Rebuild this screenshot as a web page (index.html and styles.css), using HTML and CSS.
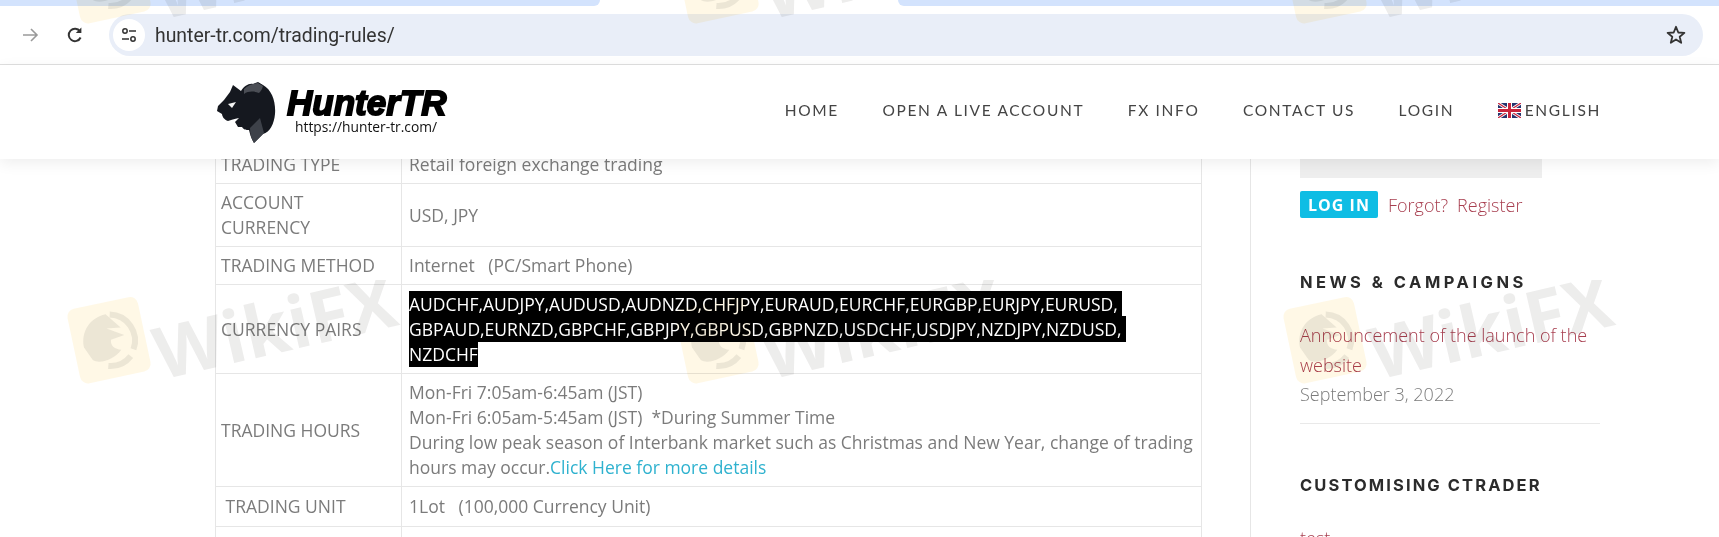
FILE: index.html
```html
<!DOCTYPE html>
<html lang="en">
    <head>
        <meta charset="UTF-8" />
        <title>Trading Rules - HunterTR</title>
        <link rel="stylesheet" href="styles.css">
    </head>
    <body>
        <svg class="defs" width="0" height="0">
            <symbol id="wm" viewBox="0 0 340 120">
                <g transform="rotate(-12 45 60)">
                    <rect x="8" y="22" width="72" height="76" rx="8" fill="#ffc83c" opacity=".13" />
                    <path d="M50 35 A26 26 0 0 1 66 74 M62 80 A26 26 0 0 1 38 85" fill="none" stroke="#6e6a66" stroke-width="6" opacity=".13" />
                    <path d="M18 62 C18 46 30 34 46 34 L58 50 L44 48 L60 58 L46 60 C44 66 48 70 54 72 C46 80 30 82 24 76 Z" fill="#6e6a66" opacity=".13" />
                </g>
                <text class="wm-text" x="96" y="100" transform="rotate(-13 96 100)">WikiFX</text>
            </symbol>
        </svg>

        <div class="tabstrip">
            <div class="tab tab-left"></div>
            <div class="tab tab-right"></div>
        </div>
        <div class="toolbar">
            <svg class="tool-icon" width="20" height="20" viewBox="0 0 20 20">
                <path d="M3 10 H17 M11 4 L17 10 L11 16" fill="none" stroke="#9a9a9a" stroke-width="1.6" />
            </svg>
            <svg class="tool-icon" width="20" height="20" viewBox="0 0 20 20">
                <path d="M15.6 12.5 A6.2 6.2 0 1 1 15 6.3" fill="none" stroke="#333" stroke-width="2" />
                <path d="M16.4 2.4 V8 H10.8 Z" fill="#333" />
            </svg>
            <div class="omnibox">
                <span class="site-btn">
                    <svg width="18" height="18" viewBox="0 0 18 18">
                        <circle cx="5" cy="5" r="2.2" fill="none" stroke="#333" stroke-width="1.5" />
                        <path d="M9 5 H16 M2 13 H9" stroke="#333" stroke-width="1.7" />
                        <circle cx="13" cy="13" r="2.2" fill="none" stroke="#333" stroke-width="1.5" />
                    </svg>
                </span>
                <span class="url">hunter-tr.com/trading-rules/</span>
                <svg class="star" width="22" height="22" viewBox="0 0 22 22">
                    <path d="M11 2.8 L13.3 8.5 L19.4 8.9 L14.7 12.8 L16.2 18.8 L11 15.5 L5.8 18.8 L7.3 12.8 L2.6 8.9 L8.7 8.5 Z" fill="none" stroke="#333" stroke-width="1.8" stroke-linejoin="round" />
                </svg>
            </div>
        </div>

        <header class="site-header">
            <a class="logo">
                <svg class="panther" width="60" height="64" viewBox="0 0 60 64">
                    <path d="M14 12 L17 5 L25 11 C28 6 33 3 37 4 L42 2 L47 5 C56 10 60 22 59 34 C58 44 54 52 47 54 L38 63 C35 58 34 54 33 50 C30 50 28 50 26 47 L22 47 L19 42 L23 38 C18 39 15 40 12 41 C8 40 6 36 6 34 L1 31 L2 26 L8 20 Z" fill="#15181f" />
                    <path d="M28 9 C32 5 38 3 42 3 L47 6 C46 10 44 12 43 13 C38 11 32 11 28 14 Z" fill="#4b4e55" />
                    <path d="M44 38 L48 53 L38 63 C35 58 34 54 34 48 Z" fill="#3d4149" />
                    <path d="M12 24 L20 22 L16 28 Z" fill="#f4f4f4" />
                </svg>
                <span class="logo-words">
                    <span class="logo-name">HunterTR</span>
                    <span class="logo-url">https://hunter-tr.com/</span>
                </span>
            </a>
            <nav class="menu">
                <a>Home</a>
                <a>Open a live account</a>
                <a>FX Info</a>
                <a>Contact us</a>
                <a>Login</a>
                <a class="lang">
                    <svg width="23" height="15" viewBox="0 0 23 15">
                        <rect width="23" height="15" fill="#27346e" />
                        <path d="M0 0 L23 15 M23 0 L0 15" stroke="#fff" stroke-width="3" />
                        <path d="M0 0 L23 15 M23 0 L0 15" stroke="#c8243c" stroke-width="1.2" />
                        <path d="M11.5 0 V15 M0 7.5 H23" stroke="#fff" stroke-width="5" />
                        <path d="M11.5 0 V15 M0 7.5 H23" stroke="#c8243c" stroke-width="3" />
                    </svg>
                    English
                </a>
            </nav>
        </header>

        <main class="content">
            <table class="rules">
                <tr>
                    <td>TRADING TYPE</td>
                    <td>Retail foreign exchange trading</td>
                </tr>
                <tr>
                    <td>ACCOUNT CURRENCY</td>
                    <td>USD, JPY</td>
                </tr>
                <tr>
                    <td>TRADING METHOD</td>
                    <td>Internet &nbsp;&nbsp;(PC/Smart Phone)</td>
                </tr>
                <tr>
                    <td>CURRENCY PAIRS</td>
                    <td><span class="hl">AUDCHF,AUDJPY,AUDUSD,AUDNZD,CHFJPY,EURAUD,EURCHF,EURGBP,EURJPY,EURUSD,&nbsp;<br>GBPAUD,EURNZD,GBPCHF,GBPJPY,GBPUSD,GBPNZD,USDCHF,USDJPY,NZDJPY,NZDUSD,&nbsp;<br>NZDCHF</span></td>
                </tr>
                <tr>
                    <td>TRADING HOURS</td>
                    <td>
                        Mon-Fri 7:05am-6:45am (JST)<br>
                        Mon-Fri 6:05am-5:45am (JST) &nbsp;*During Summer Time<br>
                        During low peak season of Interbank market such as Christmas and New Year, change of trading hours may occur.<a class="more">Click Here for more details</a>
                    </td>
                </tr>
                <tr>
                    <td>&nbsp;TRADING UNIT</td>
                    <td>1Lot &nbsp;&nbsp;(100,000 Currency Unit)</td>
                </tr>
                <tr>
                    <td>&nbsp;</td>
                    <td>&nbsp;</td>
                </tr>
            </table>

            <aside class="sidebar">
                <div class="login-input"></div>
                <div class="login-row">
                    <button class="login-btn">LOG IN</button>
                    <a class="red">Forgot?</a>
                    <a class="red">Register</a>
                </div>

                <h3 class="widget-title news-title">NEWS &amp; CAMPAIGNS</h3>
                <a class="red news-link">Announcement of the launch of the website</a>
                <div class="news-date">September 3, 2022</div>

                <h3 class="widget-title custom-title">CUSTOMISING CTRADER</h3>
                <a class="red news-link">test</a>
            </aside>
        </main>

        <div class="watermarks">
            <svg class="wm wm-a1"><use href="#wm" /></svg>
            <svg class="wm wm-a2"><use href="#wm" /></svg>
            <svg class="wm wm-a3"><use href="#wm" /></svg>
            <svg class="wm wm-b1"><use href="#wm" /></svg>
            <svg class="wm wm-b2"><use href="#wm" /></svg>
            <svg class="wm wm-b3"><use href="#wm" /></svg>
        </div>
    </body>
</html>
```

FILE: styles.css
```css
* {
    margin: 0;
    padding: 0;
    box-sizing: border-box;
}
html, body {
    height: 537px;
    overflow: hidden;
}
body {
    position: relative;
    background: #ffffff;
    font-family: "Open Sans", "Liberation Sans", sans-serif;
    font-size: 17.5px;
    color: #7b7b7b;
}
.defs {
    position: absolute;
}

/* browser chrome */
.tabstrip {
    height: 6px;
    display: flex;
    justify-content: space-between;
}
.tab {
    height: 6px;
    background: #d3e3fd;
}
.tab-left {
    width: 600px;
    border-bottom-right-radius: 8px;
}
.tab-right {
    width: 821px;
    border-bottom-left-radius: 8px;
}
.toolbar {
    height: 59px;
    padding: 8px 16px 0 20px;
    display: flex;
    align-items: flex-start;
    border-bottom: 1px solid #dfdfdf;
}
.tool-icon {
    margin-top: 11px;
    margin-right: 25px;
}
.omnibox {
    flex: 1;
    height: 42px;
    margin-left: -1px;
    padding: 0 16px 0 4px;
    display: flex;
    align-items: center;
    background: #e9eef8;
    border-radius: 21px;
}
.site-btn {
    width: 32px;
    height: 32px;
    border-radius: 50%;
    background: #ffffff;
    display: flex;
    align-items: center;
    justify-content: center;
}
.url {
    flex: 1;
    margin-left: 10px;
    font-family: Roboto, "Liberation Sans", sans-serif;
    font-size: 19.4px;
    color: #333333;
}

/* site header */
.site-header {
    position: relative;
    z-index: 2;
    height: 94px;
    padding: 15px 118px 0 216px;
    display: flex;
    justify-content: space-between;
    background: #ffffff;
    box-shadow: 0 4px 14px rgba(0, 0, 0, 0.07);
}
.logo {
    display: flex;
    height: 64px;
}
.logo-words {
    display: flex;
    flex-direction: column;
    margin-left: 11px;
    padding-top: 5px;
}
.logo-name {
    font-family: "Liberation Sans", sans-serif;
    font-size: 35px;
    line-height: 36px;
    font-weight: 700;
    font-style: italic;
    color: #000000;
    -webkit-text-stroke: 1.8px #000000;
}
.logo-url {
    margin-left: 8px;
    margin-top: -4px;
    font-size: 13.8px;
    line-height: 20px;
    color: #111111;
}
.menu {
    display: flex;
    gap: 43.5px;
    padding-top: 15px;
    height: 45px;
    font-family: Lato, sans-serif;
    font-size: 15.5px;
    line-height: 30px;
    letter-spacing: 1.66px;
    text-transform: uppercase;
    color: #444444;
}
.lang {
    display: flex;
    align-items: center;
    gap: 4px;
}

/* page body */
.content {
    display: flex;
    align-items: flex-start;
    padding-left: 215px;
}
.rules {
    width: 987px;
    margin-top: -14px;
    border-collapse: collapse;
    table-layout: fixed;
    flex-shrink: 0;
    line-height: 25px;
}
.rules td {
    padding: 6px 5px;
    border: 1px solid #e6e6e6;
    vertical-align: middle;
}
.rules td:first-child {
    width: 186px;
}
.rules td:last-child {
    padding-left: 7px;
}
.rules tr:nth-child(1) td { height: 38px; }
.rules tr:nth-child(2) td { height: 63px; }
.rules tr:nth-child(3) td { height: 38px; }
.rules tr:nth-child(4) td { height: 89px; }
.rules tr:nth-child(5) td { height: 113px; }
.rules tr:nth-child(6) td { height: 40px; }
.rules tr:nth-child(7) td { height: 40px; }
.hl {
    padding: 1px 0;
    background: #000000;
    color: #ffffff;
}
.more {
    color: #2fb2cf;
}
.sidebar {
    width: 350px;
    height: 400px;
    margin-left: 48px;
    padding-left: 49px;
    border-left: 1px solid #e6e6e6;
}
.login-input {
    width: 242px;
    height: 19px;
    background: #eeeeee;
}
.login-row {
    margin-top: 13px;
    display: flex;
    align-items: center;
    gap: 9px;
    font-size: 18px;
}
.login-btn {
    width: 78px;
    height: 27px;
    margin-right: 1px;
    border: none;
    border-radius: 2px;
    background: #0fbde4;
    color: #ffffff;
    font-family: "Open Sans", sans-serif;
    font-size: 16px;
    font-weight: 700;
    letter-spacing: 1px;
}
.red {
    color: #a83f50;
    font-weight: 300;
}
.widget-title {
    font-family: Inter, sans-serif;
    font-size: 16.5px;
    line-height: 20px;
    font-weight: 700;
    color: #2b2b2b;
}
.news-title {
    margin-top: 54px;
    letter-spacing: 3.5px;
}
.news-link {
    display: block;
    width: 300px;
    margin-top: 28px;
    font-size: 18px;
    line-height: 30px;
}
.news-date {
    width: 300px;
    padding-bottom: 15px;
    border-bottom: 1px solid #e9e9e9;
    font-size: 18px;
    font-weight: 300;
    line-height: 28px;
}
.custom-title {
    margin-top: 51px;
    letter-spacing: 2.1px;
}

/* watermark layer */
.watermarks {
    position: absolute;
    inset: 0;
    z-index: 5;
    pointer-events: none;
    mix-blend-mode: multiply;
}
.wm {
    position: absolute;
    width: 340px;
    height: 120px;
}
.wm-text {
    font-family: "Open Sans", sans-serif;
    font-size: 72px;
    font-weight: 700;
    fill: #6e6a66;
    opacity: 0.12;
}
.wm-a1 { left: 65px; top: -80px; }
.wm-a2 { left: 673px; top: -80px; }
.wm-a3 { left: 1281px; top: -80px; }
.wm-b1 { left: 65px; top: 280px; }
.wm-b2 { left: 673px; top: 280px; }
.wm-b3 { left: 1281px; top: 280px; }
```
